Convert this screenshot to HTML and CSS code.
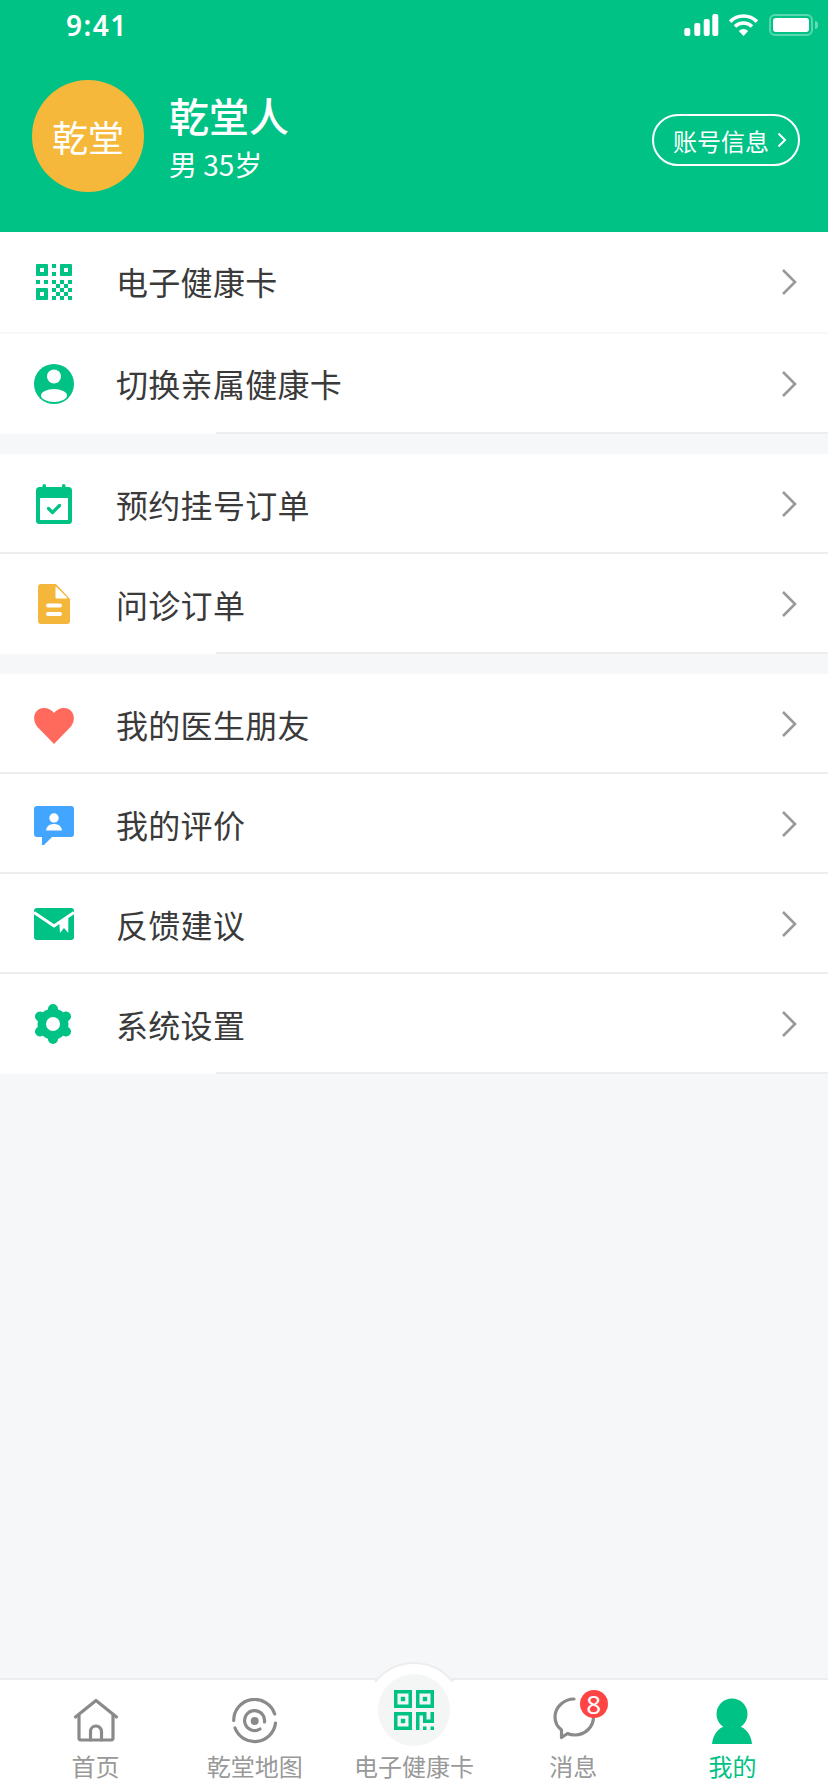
FILE: index.html
```html
<!DOCTYPE html>
<html lang="zh-CN">
<head>
  <meta charset="utf-8">
  <title>我的</title>
  <link rel="stylesheet" href="styles.css">
</head>
<body>
  <div class="page">
    <header class="top">
      <div class="status-bar">
        <span class="time">9:41</span>
        <div class="status-icons">
          <svg class="signal" width="35" height="22" viewBox="0 0 35 22" fill="#fff">
            <rect x="0.3" y="14" width="6" height="8" rx="2"/>
            <rect x="10.3" y="9" width="6" height="13" rx="2"/>
            <rect x="19.7" y="5" width="6" height="17" rx="2"/>
            <rect x="28.3" y="0" width="6" height="22" rx="2"/>
          </svg>
          <svg class="wifi" width="31" height="22" viewBox="0 0 31 22" fill="none" stroke="#fff" stroke-width="3.6">
            <path d="M2.1 7.6A19 19 0 0 1 28.9 7.6"/>
            <path d="M7 12.5A12 12 0 0 1 24 12.5"/>
            <path d="M15.5 22L10.8 17A6.6 6.6 0 0 1 20.2 17Z" fill="#fff" stroke="none"/>
          </svg>
          <div class="battery">
            <div class="battery-level"></div>
          </div>
          <div class="battery-nub"></div>
        </div>
      </div>
      <div class="profile">
        <div class="avatar">乾堂</div>
        <div class="profile-info">
          <div class="profile-name">乾堂人</div>
          <div class="profile-sub">男 35岁</div>
        </div>
        <a class="account-btn" href="#">账号信息
          <svg width="10" height="16" viewBox="0 0 10 16" fill="none" stroke="#fff" stroke-width="2"><path d="M1.5 1.5L8 8L1.5 14.5"/></svg>
        </a>
      </div>
    </header>

    <main class="content">
      <section class="group">
        <a class="row row-first" href="#">
          <svg class="row-icon" width="40" height="40" viewBox="0 0 40 40" fill="#00c285">
            <defs>
              <pattern id="checker" x="18" y="18" width="8" height="8" patternUnits="userSpaceOnUse">
                <rect width="4" height="4"/>
                <rect x="4" y="4" width="4" height="4"/>
              </pattern>
            </defs>
            <path fill-rule="evenodd" d="M3 2h10a1 1 0 0 1 1 1v10a1 1 0 0 1-1 1H3a1 1 0 0 1-1-1V3a1 1 0 0 1 1-1zm3 4v4h4V6z"/>
            <path fill-rule="evenodd" d="M27 2h10a1 1 0 0 1 1 1v10a1 1 0 0 1-1 1H27a1 1 0 0 1-1-1V3a1 1 0 0 1 1-1zm3 4v4h4V6z"/>
            <path fill-rule="evenodd" d="M3 26h10a1 1 0 0 1 1 1v10a1 1 0 0 1-1 1H3a1 1 0 0 1-1-1V27a1 1 0 0 1 1-1zm3 4v4h4v-4z"/>
            <rect x="18" y="2" width="4" height="4"/>
            <rect x="18" y="10" width="4" height="4"/>
            <rect x="2" y="18" width="4" height="4"/>
            <rect x="10" y="18" width="4" height="4"/>
            <rect x="18" y="18" width="20" height="20" fill="url(#checker)"/>
          </svg>
          <span class="row-label">电子健康卡</span>
          <svg class="chevron" width="16" height="28" viewBox="0 0 16 28"><path d="M2 2L14 14L2 26"/></svg>
        </a>
        <a class="row row-end" href="#">
          <svg class="row-icon" width="40" height="40" viewBox="0 0 40 40">
            <clipPath id="disc"><circle cx="20" cy="20" r="20"/></clipPath>
            <circle cx="20" cy="20" r="20" fill="#00c285"/>
            <circle cx="20" cy="12.500" r="7" fill="#fff"/>
            <ellipse cx="20" cy="31.500" rx="13" ry="6.500" fill="#fff" clip-path="url(#disc)"/>
          </svg>
          <span class="row-label">切换亲属健康卡</span>
          <svg class="chevron" width="16" height="28" viewBox="0 0 16 28"><path d="M2 2L14 14L2 26"/></svg>
        </a>
      </section>

      <section class="group">
        <a class="row" href="#">
          <svg class="row-icon" width="40" height="40" viewBox="0 0 40 40">
            <rect x="2" y="3" width="36" height="37" rx="3.500" fill="#00c285"/>
            <rect x="8.500" y="0" width="3.500" height="7" rx="1.700" fill="#00c285"/>
            <rect x="28" y="0" width="3.500" height="7" rx="1.700" fill="#00c285"/>
            <rect x="6" y="14" width="28" height="22" fill="#fff"/>
            <path d="M14.500 24.500L18.500 28.500L25.500 21.500" fill="none" stroke="#00c285" stroke-width="3.200" stroke-linecap="round" stroke-linejoin="round"/>
          </svg>
          <span class="row-label">预约挂号订单</span>
          <svg class="chevron" width="16" height="28" viewBox="0 0 16 28"><path d="M2 2L14 14L2 26"/></svg>
        </a>
        <a class="row row-end" href="#">
          <svg class="row-icon" width="40" height="40" viewBox="0 0 40 40">
            <path d="M7 0H22L36 15V37a3 3 0 0 1-3 3H7a3 3 0 0 1-3-3V3a3 3 0 0 1 3-3z" fill="#f5b73b"/>
            <path d="M22 3V14H33Z" fill="#fff" stroke="#fff" stroke-linejoin="round"/>
            <rect x="12" y="19.500" width="16" height="4" rx="2" fill="#fff"/>
            <rect x="12" y="28" width="16" height="4" rx="2" fill="#fff"/>
          </svg>
          <span class="row-label">问诊订单</span>
          <svg class="chevron" width="16" height="28" viewBox="0 0 16 28"><path d="M2 2L14 14L2 26"/></svg>
        </a>
      </section>

      <section class="group">
        <a class="row" href="#">
          <svg class="row-icon" width="40" height="40" viewBox="0 0 40 40">
            <path d="M20 40L3 22.500C-3 14 1 4 10 4C14 4 18 6 20 9C22 6 26 4 30 4C39 4 43 14 37 22.500Z" fill="#ff6a5c"/>
          </svg>
          <span class="row-label">我的医生朋友</span>
          <svg class="chevron" width="16" height="28" viewBox="0 0 16 28"><path d="M2 2L14 14L2 26"/></svg>
        </a>
        <a class="row" href="#">
          <svg class="row-icon" width="40" height="41" viewBox="0 0 40 41">
            <path d="M3 2H37a3 3 0 0 1 3 3V30a3 3 0 0 1-3 3H18L10 41a1 1 0 0 1-2-1V33H3a3 3 0 0 1-3-3V5a3 3 0 0 1 3-3z" fill="#42a5ff"/>
            <circle cx="20" cy="14" r="4.700" fill="#fff"/>
            <path d="M12 26.500C12.500 22 16 20 20 20C24 20 27.500 22 28 26.500Z" fill="#fff"/>
          </svg>
          <span class="row-label">我的评价</span>
          <svg class="chevron" width="16" height="28" viewBox="0 0 16 28"><path d="M2 2L14 14L2 26"/></svg>
        </a>
        <a class="row" href="#">
          <svg class="row-icon" width="40" height="40" viewBox="0 0 40 40">
            <rect x="0" y="4" width="40" height="32" rx="3" fill="#00c285"/>
            <path d="M0 8.500L20 22L40 8.500" fill="none" stroke="#fff" stroke-width="3"/>
            <path d="M25.300 19L34.300 13.500V29L30 24L26 29Z" fill="#fff"/>
          </svg>
          <span class="row-label">反馈建议</span>
          <svg class="chevron" width="16" height="28" viewBox="0 0 16 28"><path d="M2 2L14 14L2 26"/></svg>
        </a>
        <a class="row row-end" href="#">
          <svg class="row-icon" width="40" height="40" viewBox="0 0 40 40">
            <circle cx="19" cy="20" r="15.500" fill="#00c285"/>
            <path d="M19 5V35M6 12.500L32 27.500M6 27.500L32 12.500" stroke="#00c285" stroke-width="10" stroke-linecap="round"/>
            <circle cx="19" cy="20" r="7" fill="#fff"/>
          </svg>
          <span class="row-label">系统设置</span>
          <svg class="chevron" width="16" height="28" viewBox="0 0 16 28"><path d="M2 2L14 14L2 26"/></svg>
        </a>
      </section>
    </main>

    <nav class="tabbar">
      <div class="tab-bump"></div>
      <a class="tab" href="#">
        <svg class="tab-icon" width="46" height="46" viewBox="0 0 46 46" fill="none" stroke="#8a8a8a" stroke-width="3.200" stroke-linecap="round" stroke-linejoin="round">
          <path d="M2.500 19L23 2.500L43.500 19"/>
          <path d="M6 17.500V40a2 2 0 0 0 2 2H38a2 2 0 0 0 2-2V17.500"/>
          <path d="M17.500 42V33.500a5.500 5.500 0 0 1 11 0V42"/>
        </svg>
        <span class="tab-label">首页</span>
      </a>
      <a class="tab" href="#">
        <svg class="tab-icon" width="46" height="46" viewBox="0 0 46 46" fill="none" stroke="#8a8a8a" stroke-width="3.200" stroke-linecap="round">
          <path d="M1.700 22.500A21 21 0 0 1 42.700 16"/>
          <path d="M43.500 25A21 21 0 0 1 3 30"/>
          <path d="M32.500 24A10 10 0 1 0 28 31"/>
          <circle cx="22.700" cy="23" r="4" fill="#8a8a8a" stroke="none"/>
        </svg>
        <span class="tab-label">乾堂地图</span>
      </a>
      <a class="tab" href="#">
        <div class="qr-disc">
          <svg width="40" height="40" viewBox="0 0 40 40" fill="#00c285">
            <path fill-rule="evenodd" d="M0 0H18V18H0zM3.500 3.500V14.500H14.500V3.500z"/>
            <rect x="6.800" y="6.800" width="4.400" height="4.400"/>
            <path fill-rule="evenodd" d="M22 0H40V18H22zM25.500 3.500V14.500H36.500V3.500z"/>
            <rect x="28.800" y="6.800" width="4.400" height="4.400"/>
            <path fill-rule="evenodd" d="M0 22H18V40H0zM3.500 25.500V36.500H14.500V25.500z"/>
            <rect x="6.800" y="28.800" width="4.400" height="4.400"/>
            <rect x="22" y="22" width="3.500" height="18"/>
            <rect x="22" y="22" width="10" height="3.500"/>
            <rect x="29" y="22" width="3.500" height="11"/>
            <rect x="29" y="29.500" width="11" height="3.500"/>
            <rect x="36.500" y="22" width="3.500" height="11"/>
            <rect x="29" y="36.500" width="3.500" height="3.500"/>
            <rect x="36.500" y="36.500" width="3.500" height="3.500"/>
          </svg>
        </div>
        <span class="tab-label">电子健康卡</span>
      </a>
      <a class="tab" href="#">
        <svg class="tab-icon tab-icon-msg" width="46" height="46" viewBox="0 0 46 46" fill="none" stroke="#8a8a8a" stroke-width="3.200" stroke-linecap="round" stroke-linejoin="round">
          <path d="M41.500 21C41.500 31 33 39 23 39C19.500 39 17 38.300 15.500 37.500L9.500 41.500L9.500 34C5 30.500 3 26 3 21C3 11 12 3 22 3"/>
        </svg>
        <span class="badge">8</span>
        <span class="tab-label tab-label-msg">消息</span>
      </a>
      <a class="tab tab-active" href="#">
        <svg class="tab-icon" width="46" height="46" viewBox="0 0 46 46" fill="#00c285">
          <circle cx="23" cy="16" r="15.500"/>
          <path d="M3 46C4 35 11 27 23 27C35 27 42 35 43 46Z"/>
        </svg>
        <span class="tab-label">我的</span>
      </a>
    </nav>
  </div>
</body>
</html>
```

FILE: styles.css
```css
* {
  box-sizing: border-box;
}

body {
  margin: 0;
  font-family: "Noto Sans CJK SC", "Noto Sans", sans-serif;
  background-color: #f6f7f9;
}

a {
  color: inherit;
  text-decoration: none;
}

.page {
  display: flex;
  flex-direction: column;
  height: 1792px;
  overflow: hidden;
}

/* header */
.top {
  height: 232px;
  background-color: #00c285;
  color: #fff;
}

.status-bar {
  display: flex;
  align-items: center;
  justify-content: space-between;
  height: 50px;
  padding: 0 10px 0 66px;
}

.time {
  font-family: "Noto Sans", sans-serif;
  font-size: 28px;
  font-weight: 600;
  letter-spacing: 1.5px;
}

.status-icons {
  display: flex;
  align-items: center;
}

.wifi {
  margin-left: 9px;
}

.battery {
  width: 44px;
  height: 22px;
  margin-left: 10px;
  padding: 2px;
  border: 2px solid rgba(255, 255, 255, 0.35);
  border-radius: 6px;
}

.battery-level {
  width: 100%;
  height: 100%;
  background-color: #fff;
  border-radius: 3px;
}

.battery-nub {
  width: 3px;
  height: 8px;
  margin-left: 2px;
  background-color: rgba(255, 255, 255, 0.4);
  border-radius: 0 3px 3px 0;
}

.profile {
  display: flex;
  align-items: center;
  padding: 30px 28px 0 32px;
}

.avatar {
  display: flex;
  align-items: center;
  justify-content: center;
  width: 112px;
  height: 112px;
  background-color: #f5b83a;
  border-radius: 50%;
  font-size: 36px;
}

.profile-info {
  flex: 1;
  margin-left: 25px;
}

.profile-name {
  margin-bottom: 2px;
  font-size: 40px;
  font-weight: 500;
  line-height: 54px;
}

.profile-sub {
  font-size: 28px;
  line-height: 40px;
}

.account-btn {
  display: flex;
  align-items: center;
  justify-content: space-between;
  width: 148px;
  height: 52px;
  margin-top: 8px;
  padding: 0 11px 0 19px;
  border: 2px solid #fff;
  border-radius: 26px;
  font-size: 24px;
}

/* menu */
.content {
  flex: 1;
}

.group {
  margin-bottom: 20px;
  background-color: #fff;
}

.group:first-child .row-label {
  margin-top: -2px;
}

.row {
  position: relative;
  display: flex;
  align-items: center;
  height: 100px;
  padding: 2px 31px 0 34px;
  border-bottom: 2px solid #ededed;
}

.row-first {
  height: 102px;
  padding-bottom: 2px;
  border-bottom-color: #f7f7f7;
}

.row-end {
  border-bottom: 0;
  padding-bottom: 2px;
}

.row-end::after {
  content: "";
  position: absolute;
  left: 216px;
  right: 0;
  bottom: 0;
  height: 2px;
  background-color: #ededed;
}

.row-label {
  flex: 1;
  margin-left: 42px;
  color: #3a3a3a;
  font-size: 32px;
  letter-spacing: 0.3px;
}

.chevron {
  fill: none;
  stroke: #999;
  stroke-width: 2.6px;
}

/* bottom tabs */
.tabbar {
  position: relative;
  display: grid;
  grid-template-columns: repeat(5, 1fr);
  height: 114px;
  padding: 0 16px;
  background-color: #fff;
  border-top: 2px solid #ededed;
}

.tab-bump {
  position: absolute;
  top: -18px;
  left: 50%;
  width: 100px;
  height: 100px;
  margin-left: -50px;
  background-color: #fff;
  border: 2px solid #ededed;
  border-radius: 50%;
  clip-path: inset(0 0 80px 0);
}

.tab {
  position: relative;
  display: flex;
  flex-direction: column;
  align-items: center;
  color: #999;
}

.tab-icon {
  margin-top: 18px;
}

.tab-icon-msg {
  margin-top: 16px;
  margin-left: 3px;
}

.tab-label {
  margin-top: 5px;
  font-size: 24px;
  line-height: 34px;
  white-space: nowrap;
}

.tab-label-msg {
  margin-top: 7px;
}

.tab-active {
  color: #00c285;
}

.qr-disc {
  position: relative;
  display: flex;
  align-items: center;
  justify-content: center;
  width: 72px;
  height: 72px;
  margin-top: -6px;
  margin-bottom: -2px;
  background-color: #f3f6f5;
  border-radius: 50%;
}

.badge {
  position: absolute;
  top: 10px;
  left: 86px;
  width: 28px;
  height: 28px;
  background-color: #ff4444;
  border-radius: 50%;
  color: #fff;
  font-family: "Noto Sans", sans-serif;
  font-size: 26px;
  line-height: 28px;
  text-align: center;
}
```
